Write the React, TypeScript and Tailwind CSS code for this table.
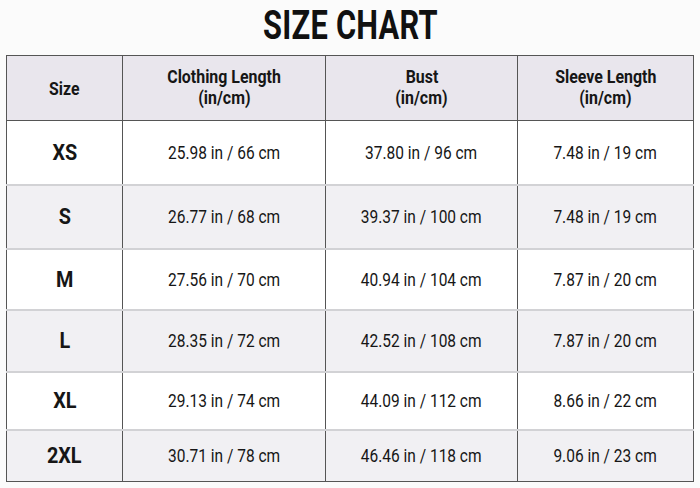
import React from "react";

const rows = [
  { size: "XS", length: "25.98 in / 66 cm", bust: "37.80 in / 96 cm", sleeve: "7.48 in / 19 cm", h: "h-[64px]", bg: "bg-white" },
  { size: "S", length: "26.77 in / 68 cm", bust: "39.37 in / 100 cm", sleeve: "7.48 in / 19 cm", h: "h-[64px]", bg: "bg-[#f1f0f3]" },
  { size: "M", length: "27.56 in / 70 cm", bust: "40.94 in / 104 cm", sleeve: "7.87 in / 20 cm", h: "h-[61px]", bg: "bg-white" },
  { size: "L", length: "28.35 in / 72 cm", bust: "42.52 in / 108 cm", sleeve: "7.87 in / 20 cm", h: "h-[62px]", bg: "bg-[#f1f0f3]" },
  { size: "XL", length: "29.13 in / 74 cm", bust: "44.09 in / 112 cm", sleeve: "8.66 in / 22 cm", h: "h-[58px]", bg: "bg-white" },
  { size: "2XL", length: "30.71 in / 78 cm", bust: "46.46 in / 118 cm", sleeve: "9.06 in / 23 cm", h: "h-[52px]", bg: "bg-[#f1f0f3]" },
];

function Narrow({ children, className = "scale-x-[0.86]" }: { children: React.ReactNode; className?: string }) {
  return <span className={`inline-block whitespace-nowrap ${className}`}>{children}</span>;
}

export default function App() {
  return (
    <div className="w-[700px] h-[488px] bg-[#fbfbfb] text-[#161616] overflow-hidden" style={{ fontFamily: "Roboto, 'Liberation Sans', sans-serif" }}>
      {/* Title */}
      <div className="h-[55px] flex items-center justify-center">
        <h1 className="text-[40px] font-bold leading-none tracking-[0.3px] -mt-[3px] text-[#111]">
          <span className="inline-block scale-x-[0.77]">SIZE CHART</span>
        </h1>
      </div>

      {/* Table */}
      <table className="ml-[6px] w-[687px] table-fixed border-collapse border border-[#555]">
        <colgroup>
          <col className="w-[116px]" />
          <col className="w-[203px]" />
          <col className="w-[192px]" />
          <col className="w-[176px]" />
        </colgroup>
        <thead>
          <tr className="h-[65px] bg-[#e9e6ed] border-b border-[#555]">
            <th className="border-x border-[#555] text-[18px] font-bold leading-[21px]">
              <Narrow className="scale-x-[0.88]">Size</Narrow>
            </th>
            <th className="border-x border-[#555] text-[18.5px] font-bold leading-[21px]">
              <Narrow>Clothing Length</Narrow>
              <br />
              <Narrow>(in/cm)</Narrow>
            </th>
            <th className="border-x border-[#555] text-[18.5px] font-bold leading-[21px]">
              <Narrow>Bust</Narrow>
              <br />
              <Narrow>(in/cm)</Narrow>
            </th>
            <th className="border-x border-[#555] text-[18.5px] font-bold leading-[21px]">
              <Narrow>Sleeve Length</Narrow>
              <br />
              <Narrow>(in/cm)</Narrow>
            </th>
          </tr>
        </thead>
        <tbody>
          {rows.map((r, i) => (
            <tr key={r.size} className={`${r.h} ${r.bg} ${i > 0 ? "border-t-2 border-[#d2d2d5]" : ""}`}>
              <td className="border-x border-[#555] text-center text-[22px] font-bold">
                <Narrow className="scale-x-[0.9]">{r.size}</Narrow>
              </td>
              <td className="border-x border-[#555] text-center text-[18px]">
                <Narrow>{r.length}</Narrow>
              </td>
              <td className="border-x border-[#555] text-center text-[18px]">
                <Narrow>{r.bust}</Narrow>
              </td>
              <td className="border-x border-[#555] text-center text-[18px]">
                <Narrow>{r.sleeve}</Narrow>
              </td>
            </tr>
          ))}
        </tbody>
      </table>
    </div>
  );
}
